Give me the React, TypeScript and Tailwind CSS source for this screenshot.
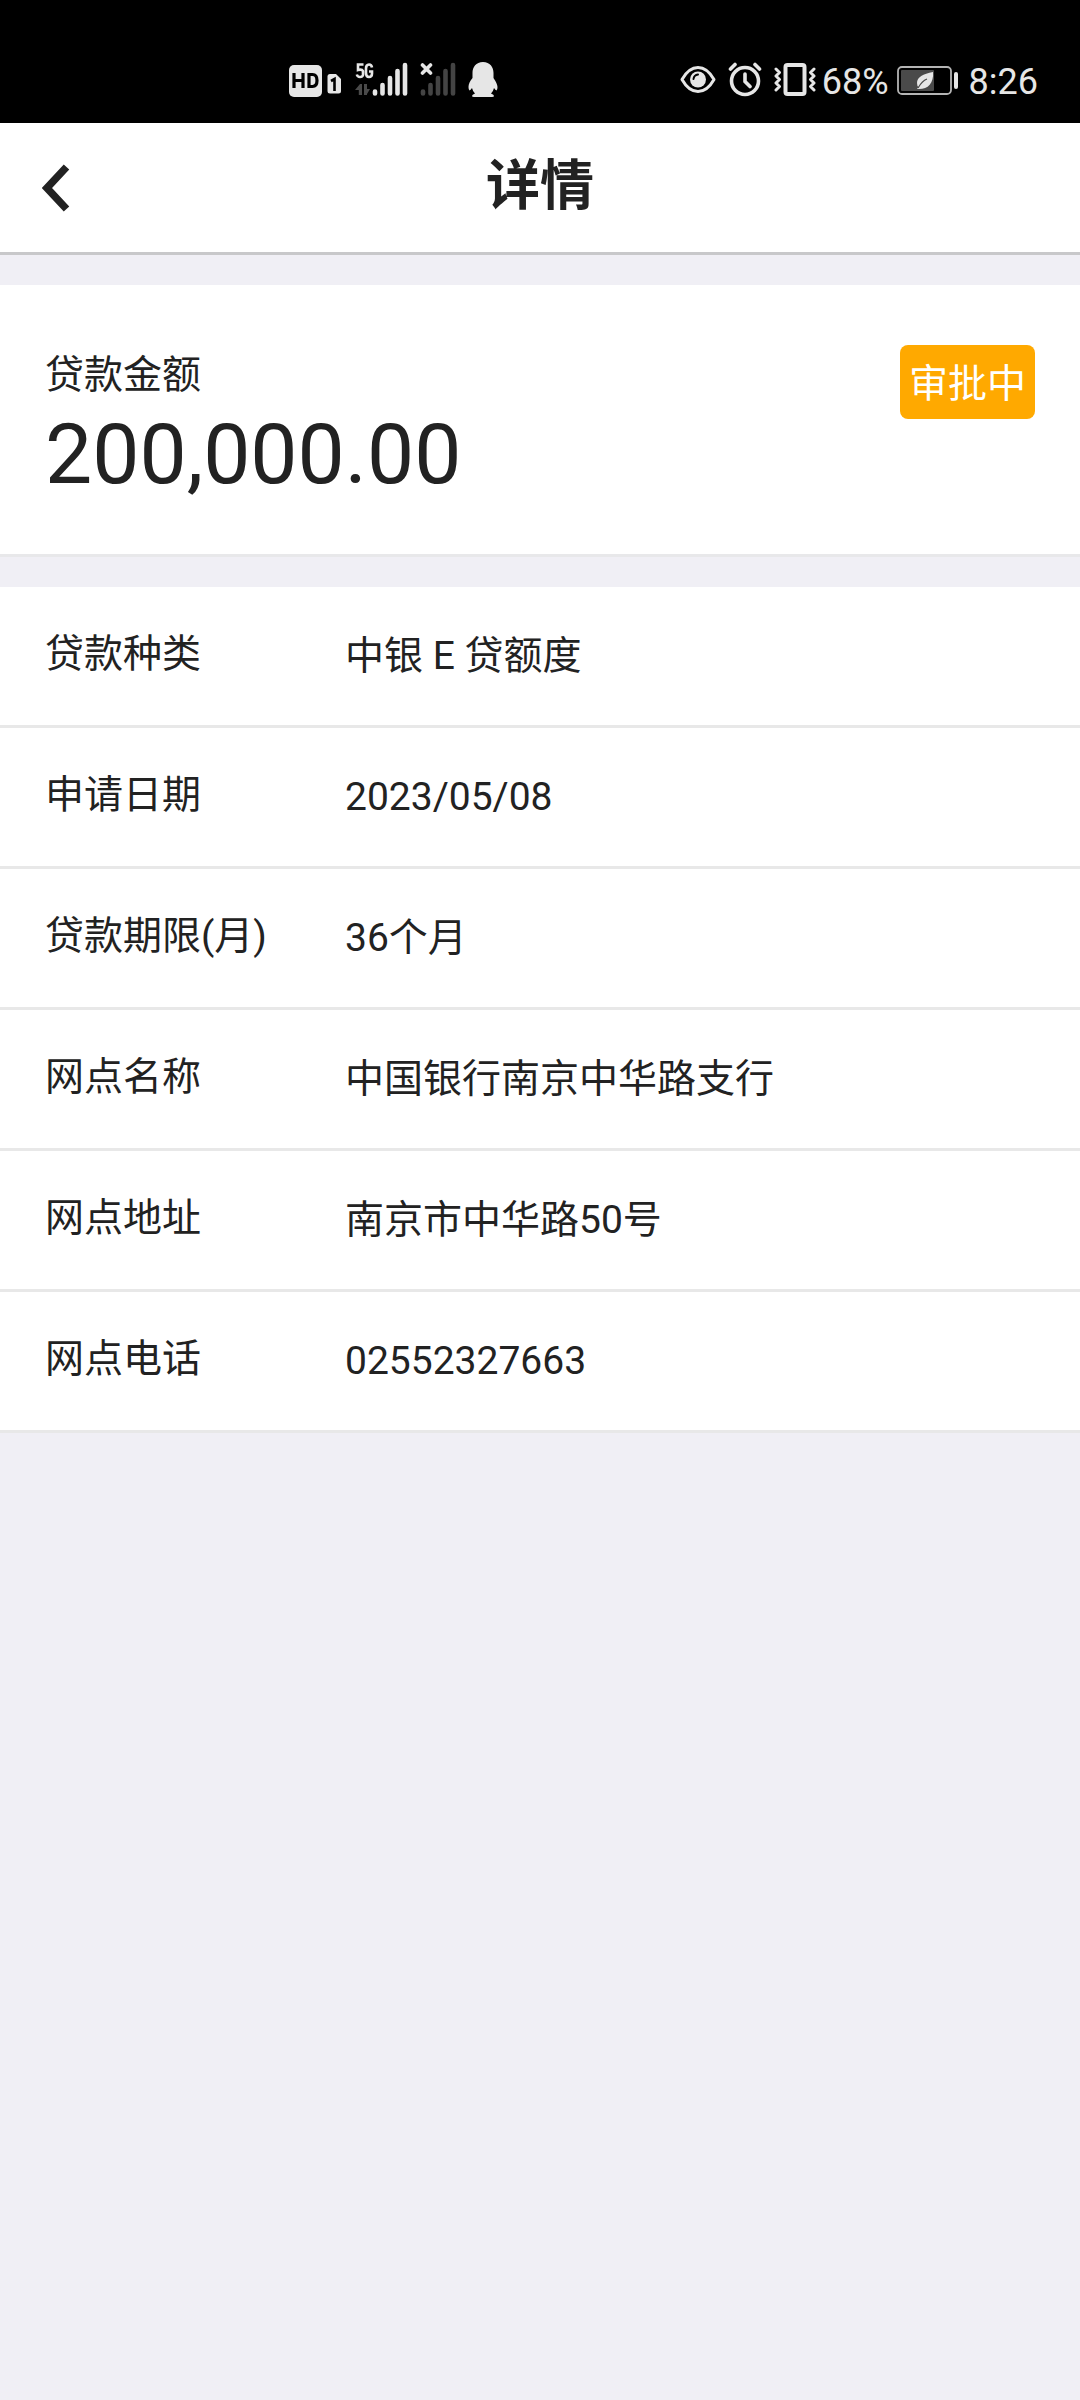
import React from 'react'

interface DetailItem {
  label: string
  value: string
}

const details: DetailItem[] = [
  { label: '贷款种类', value: '中银 E 贷额度' },
  { label: '申请日期', value: '2023/05/08' },
  { label: '贷款期限(月)', value: '36个月' },
  { label: '网点名称', value: '中国银行南京中华路支行' },
  { label: '网点地址', value: '南京市中华路50号' },
  { label: '网点电话', value: '02552327663' },
]

const HdIcon: React.FC = () => (
  <svg width="54" height="36" viewBox="0 0 54 36" fill="#e6e6e6">
    <rect x="0" y="3" width="33" height="32" rx="5" />
    <path
      d="M5 11v15M14 11v15M5 18.500h9M20 12.500v12h3.500q4.500 0 4.500-6t-4.500-6z"
      fill="none"
      stroke="#000"
      strokeWidth="3.200"
    />
    <path d="M41 12h6l5 5v12q0 2.500-2.500 2.500H41q-2.500 0-2.500-2.500V14.500Q38.500 12 41 12z" />
    <path
      d="M42 19l3.500-2v12"
      fill="none"
      stroke="#000"
      strokeWidth="2.600"
    />
  </svg>
)

const SignalBars: React.FC<{ x: number; color: string }> = ({ x, color }) => (
  <g stroke={color} strokeWidth="4.600" strokeLinecap="round">
    <path
      d={`M${x} 29.500v2M${x + 7.5} 23v8.500M${x + 15} 16v15.500M${x + 22.5} 9v22.500M${x + 30} 3v28.500`}
    />
  </g>
)

const SignalIcon: React.FC = () => (
  <svg width="53" height="36" viewBox="0 0 53 36">
    <path
      d="M8.500 2.500H3V8q4-1 5 1v4q-.5 2-3 2t-3.200-2.500M17 5.500q-.5-3-3-3-3 0-3 4V11q0 4 3 4 3 0 3-3.500V9.500h-3"
      fill="none"
      stroke="#e6e6e6"
      strokeWidth="2.600"
    />
    <path d="M7 22v11H3.800v-5H0l5-6zM9 22h3v11H9zM12 27h3l-3 5z" fill="#4a4a4a" />
    <SignalBars x={20} color="#e6e6e6" />
  </svg>
)

const NoSignalIcon: React.FC = () => (
  <svg width="36" height="36" viewBox="0 0 36 36">
    <SignalBars x={3} color="#444" />
    <path d="M0 0h14v16H0z" fill="#000" />
    <path
      d="M2.500 3l8 8M10.500 3l-8 8"
      stroke="#e6e6e6"
      strokeWidth="3.600"
      strokeLinecap="round"
    />
  </svg>
)

const PenguinIcon: React.FC = () => (
  <svg width="30" height="36" viewBox="0 0 30 36" fill="#e6e6e6">
    <path d="M15 0C8 0 4.500 5 4.500 11v5C2 19 .5 22 .5 25q0 3 1 3.500Q2.500 28 4 26q.8 3.500 3 5.500-3 1-3 2.500 0 1 2 1h18q2 0 2-1 0-1.500-3-2.500 2.200-2 3-5.500 1.500 2 2.500 2.500 1-.5 1-3.500 0-3-4-9v-5C25.500 5 22 0 15 0z" />
  </svg>
)

const EyeIcon: React.FC = () => (
  <svg width="36" height="36" viewBox="0 0 36 36" fill="none">
    <path
      d="M2 17.500C11 1.500 25 1.500 34 17.500C25 33.500 11 33.500 2 17.500z"
      stroke="#e6e6e6"
      strokeWidth="3"
      strokeLinejoin="round"
    />
    <circle cx="18" cy="17.500" r="8" fill="#e6e6e6" />
    <path d="M13.500 17q.5-4 4.500-4.500" stroke="#000" strokeWidth="2" strokeLinecap="round" />
  </svg>
)

const AlarmIcon: React.FC = () => (
  <svg
    width="34"
    height="36"
    viewBox="0 0 34 36"
    fill="none"
    stroke="#e6e6e6"
    strokeWidth="3.600"
    strokeLinecap="round"
  >
    <circle cx="17" cy="19" r="13.500" />
    <path d="M17 12v7.500l5 5M2.500 7l4.500-4.500M31.500 7L27 2.500" />
  </svg>
)

const VibrateIcon: React.FC = () => (
  <svg
    width="42"
    height="36"
    viewBox="0 0 42 36"
    fill="none"
    stroke="#e6e6e6"
    strokeLinejoin="round"
    strokeLinecap="round"
  >
    <rect x="11.500" y="3" width="19" height="29" rx="2" strokeWidth="4" />
    <path
      d="M2 7l3.500 3.500L2 14l3.500 3.500L2 21l3.500 3.500L2 28M40 7l-3.500 3.500L40 14l-3.500 3.500L40 21l-3.500 3.500L40 28"
      strokeWidth="3"
    />
  </svg>
)

const BatteryIcon: React.FC = () => (
  <svg width="62" height="36" viewBox="0 0 62 36">
    <rect
      x="1"
      y="5"
      width="53"
      height="27"
      rx="4"
      fill="none"
      stroke="#b4b4b4"
      strokeWidth="1.800"
    />
    <rect x="4" y="8" width="33" height="21" rx="1" fill="#4a4a4a" />
    <path d="M36 10C26 12 20 15 20 21q0 3 1.500 4L20 27c10 1 17-5 16-17z" fill="#e6e6e6" />
    <path d="M21 26q4-7 9-9" fill="none" stroke="#4a4a4a" strokeWidth="1.200" />
    <rect x="57" y="10" width="4" height="17" rx="2" fill="#e6e6e6" />
  </svg>
)

const StatusBar: React.FC = () => (
  <div className="flex justify-between bg-black pt-[62px] pr-[42px] pb-[21px] pl-[289px] text-4xl leading-10 text-[#e6e6e6]">
    <div className="flex gap-3">
      <HdIcon />
      <SignalIcon />
      <NoSignalIcon />
      <PenguinIcon />
    </div>
    <div className="flex">
      <div className="flex gap-3">
        <EyeIcon />
        <AlarmIcon />
        <VibrateIcon />
      </div>
      <span className="ml-1.5">68%</span>
      <div className="mr-2.5 ml-2">
        <BatteryIcon />
      </div>
      <span>8:26</span>
    </div>
  </div>
)

const Header: React.FC = () => (
  <header className="grid grid-cols-[1fr_auto_1fr] items-center border-b-[3px] border-[#c8c8ca] bg-white px-[42px] pt-6 pb-[25px]">
    <button type="button" aria-label="返回" className="justify-self-start pt-0.5">
      <svg width="28" height="48" viewBox="0 0 28 48" fill="none">
        <path d="M24.500 3L5 24l19.500 21" stroke="#222" strokeWidth="7.500" />
      </svg>
    </button>
    <h1 className="text-[54px] leading-[80px] font-bold">详情</h1>
  </header>
)

export default function App() {
  return (
    <div className="min-h-screen bg-[#f0eff5] font-[Roboto,'Noto_Sans_CJK_SC',sans-serif] text-[#222]">
      <StatusBar />
      <Header />
      <main className="flex flex-col gap-[30px] pt-[30px] text-[39px] leading-[60px]">
        <section className="flex items-start justify-between border-b-[3px] border-[#e8e8ea] bg-white px-[45px] pt-[60px] pb-[49px]">
          <div>
            <p>贷款金额</p>
            <p className="text-[84px] leading-[100px]">200,000.00</p>
          </div>
          <span className="rounded-lg bg-[#ffa900] px-[9px] pt-[9px] pb-[5px] text-white">
            审批中
          </span>
        </section>
        <dl className="bg-white">
          {details.map(({ label, value }) => (
            <div
              key={label}
              className="flex border-b-[3px] border-[#e8e8e8] px-[45px] py-[37px]"
            >
              <dt className="w-[300px] shrink-0">{label}</dt>
              <dd className="leading-[64px]">{value}</dd>
            </div>
          ))}
        </dl>
      </main>
    </div>
  )
}
